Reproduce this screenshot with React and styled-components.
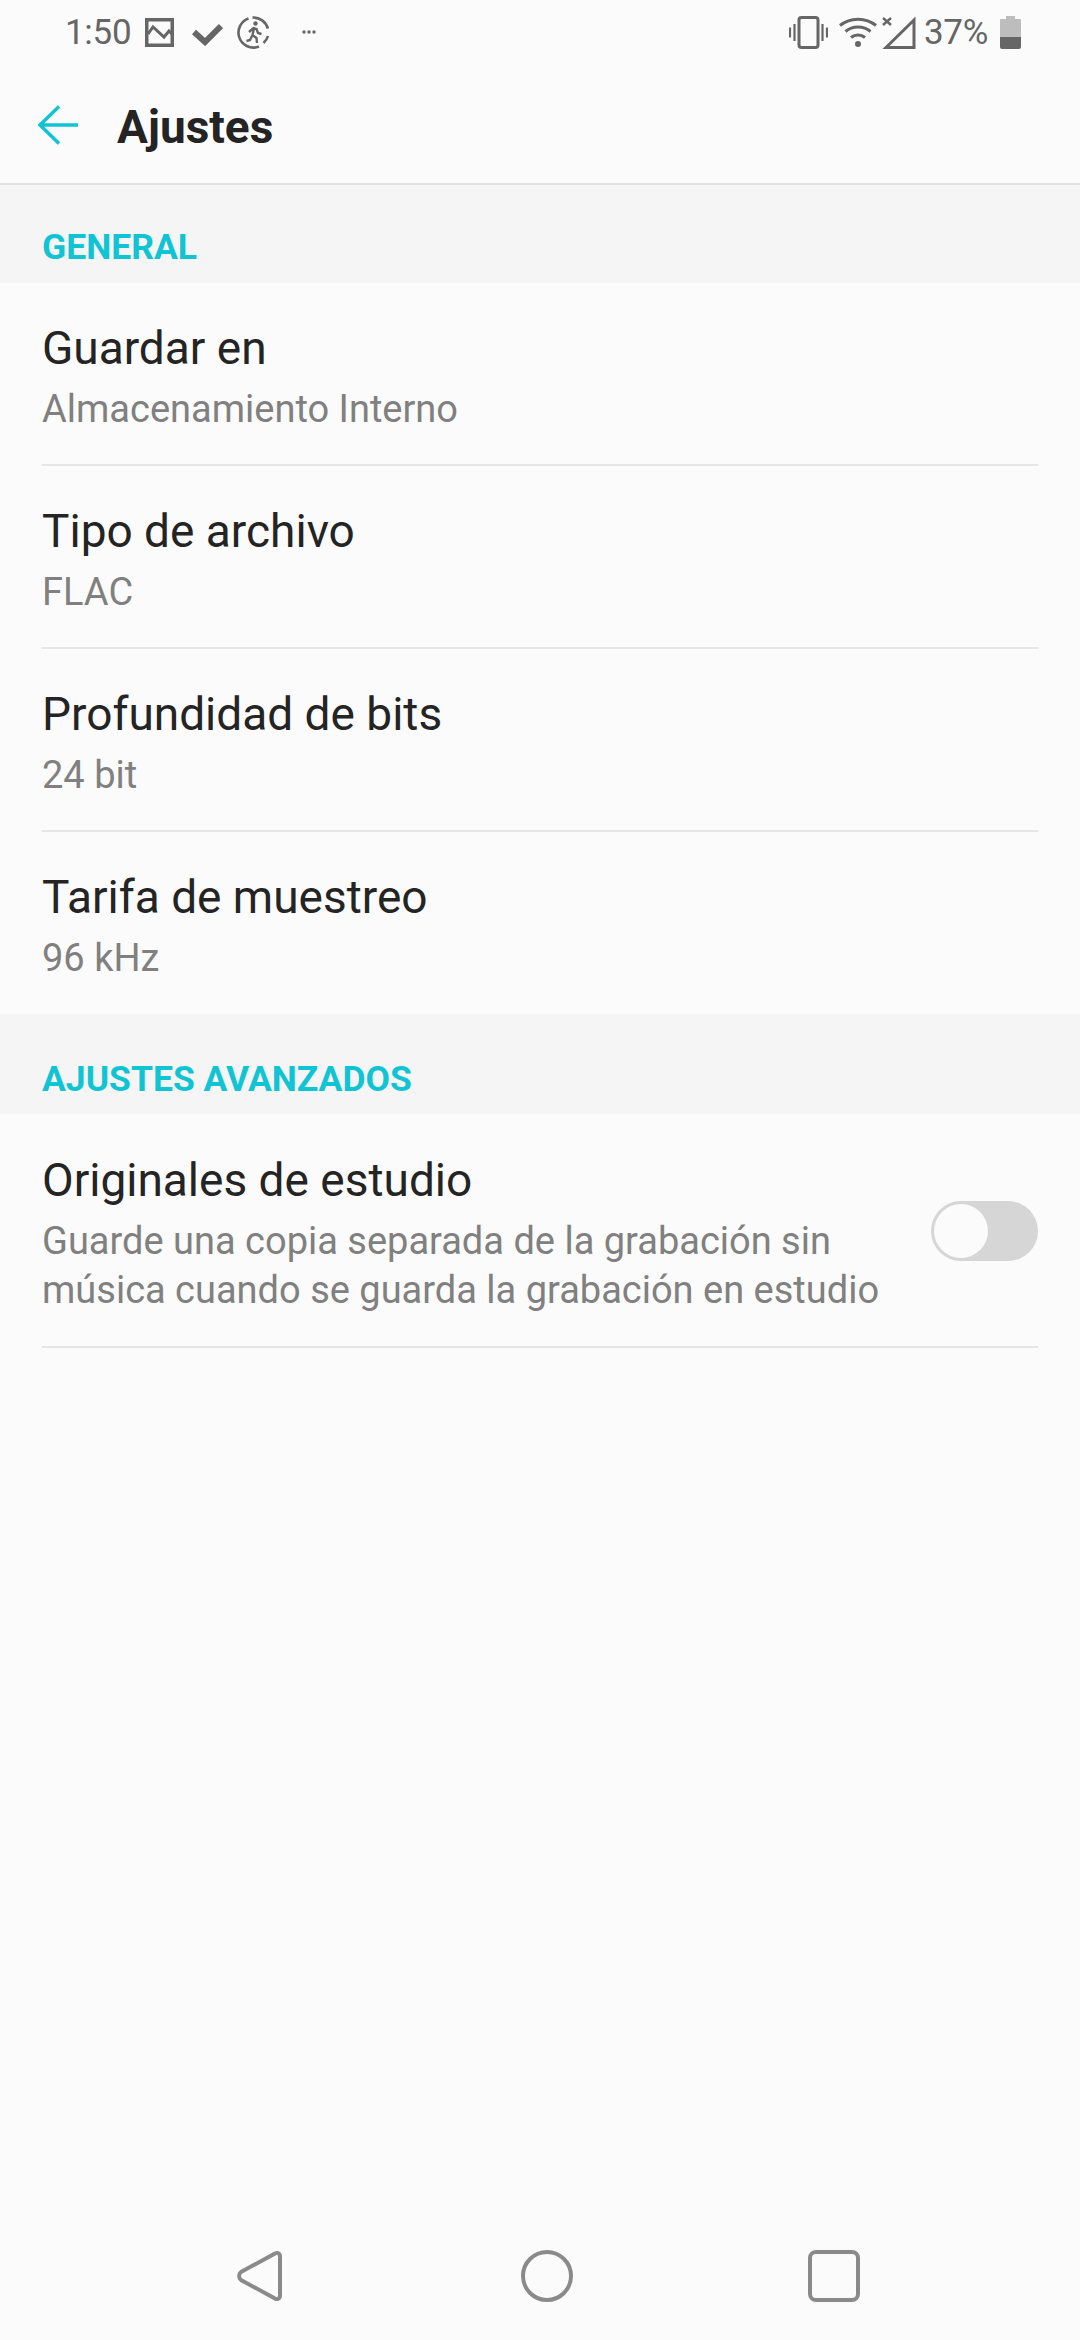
import React from 'react';
import styled, { createGlobalStyle } from 'styled-components';

const GlobalStyle = createGlobalStyle`
  html, body {
    margin: 0;
    padding: 0;
    background: #fbfbfb;
    font-family: Roboto, "Noto Sans", sans-serif;
  }
`;

const Screen = styled.div`
  width: 1080px;
  height: 2340px;
  display: flex;
  flex-direction: column;
  background: #fbfbfb;
  overflow: hidden;
`;

const StatusBar = styled.div`
  height: 64px;
  flex: none;
  display: flex;
  align-items: center;
  justify-content: space-between;
  padding: 0 59px 0 65px;
  color: #666;
`;

const StatusGroup = styled.div`
  display: flex;
  align-items: center;
`;

const StatusText = styled.span`
  font-size: 35px;
  line-height: 64px;
  letter-spacing: -0.3px;
  color: #666;
  margin: ${(p) => p.$margin || '2px 0 0 0'};
`;

const StatusIcon = styled.svg`
  display: block;
  flex: none;
  margin-left: ${(p) => p.$left || 0}px;
  margin-top: ${(p) => p.$top || 0}px;
`;

const Header = styled.header`
  height: 121px;
  flex: none;
  display: flex;
  align-items: center;
  padding: 3px 0 0 38px;
  box-sizing: border-box;
  border-bottom: 2px solid #e1e1e1;
`;

const Title = styled.h1`
  margin: 3px 0 0 39px;
  font-size: 46px;
  font-weight: 700;
  color: #242424;
`;

const SectionHead = styled.div`
  height: ${(p) => p.$height}px;
  flex: none;
  display: flex;
  align-items: flex-end;
  box-sizing: border-box;
  padding: 0 0 ${(p) => p.$bottom}px 42px;
  background: #f5f5f5;
  color: #10c4d4;
  font-size: 35.5px;
  line-height: 40px;
  font-weight: 700;
`;

const Row = styled.div`
  flex: none;
  margin: 0 42px;
  height: ${(p) => p.$height || 183}px;
  box-sizing: border-box;
  padding-top: ${(p) => p.$top || 39}px;
  display: flex;
  align-items: flex-start;
  justify-content: space-between;
  border-bottom: ${(p) => (p.$last ? 'none' : '2px solid #e6e6e6')};
`;

const RowText = styled.div`
  display: flex;
  flex-direction: column;
`;

const RowTitle = styled.div`
  font-size: 46px;
  line-height: 52px;
  color: #242424;
`;

const RowSub = styled.div`
  font-size: 38px;
  line-height: 49px;
  margin-top: 11px;
  color: #808080;
`;

const Toggle = styled.div`
  width: 107px;
  height: 60px;
  margin-top: 47px;
  border-radius: 30px;
  background: #d6d6d6;
  padding: 3px;
  box-sizing: border-box;
  flex: none;
`;

const ToggleKnob = styled.div`
  width: 54px;
  height: 54px;
  border-radius: 50%;
  background: #fbfbfb;
`;

const Spacer = styled.div`
  flex: 1;
`;

const NavBar = styled.nav`
  height: 130px;
  flex: none;
  display: flex;
  align-items: flex-start;
  gap: 235px;
  padding: 40px 0 0 237px;
  box-sizing: border-box;
`;

const NavIcon = styled.svg`
  display: block;
  fill: none;
  stroke: #8a8a8a;
  stroke-width: 4;
`;

const BackIcon = styled.svg`
  display: block;
  flex: none;
  fill: none;
  stroke: #10c4d4;
  stroke-width: 3.5;
`;

function ImageIcon() {
  return (
    <StatusIcon $left={14} width="29" height="29" viewBox="0 0 29 29" fill="none" stroke="#666" strokeWidth="3.5">
      <rect x="1.750" y="1.750" width="25.500" height="25.500" />
      <path d="M3 16l5-7 11 10 5-6 4 4" strokeWidth="3" />
    </StatusIcon>
  );
}

function CheckIcon() {
  return (
    <StatusIcon $left={18} $top={4} width="31" height="23" viewBox="0 0 31 23" fill="none" stroke="#666" strokeWidth="6">
      <path d="M2 9l11 10L29 3" />
    </StatusIcon>
  );
}

function WalkIcon() {
  return (
    <StatusIcon $left={14} width="33" height="33" viewBox="0 0 33 33" fill="none" stroke="#666">
      <path d="M15.500 1.600a15 15 0 0 1 15.400 11M31 20a15 15 0 0 1-4.500 7M22 30.500a15 15 0 0 1-20-10A15 15 0 0 1 11.500 2.500" strokeWidth="2.600" />
      <circle cx="18.500" cy="7.500" r="2.200" fill="#666" stroke="none" />
      <path d="M12 16l4.500-4 3 1 1.500 4 3.500 1M17 12.500l-1.500 6.500 4 3 .5 5M15 20l-2 4-3.500 1" strokeWidth="2.400" />
    </StatusIcon>
  );
}

function VibrateIcon() {
  return (
    <StatusIcon width="39" height="33" viewBox="0 0 39 33" fill="none" stroke="#666">
      <rect x="10" y="1.500" width="19" height="30" rx="2.500" strokeWidth="3" />
      <path d="M5.500 8v17M1 11.500v10M33.500 8v17M38 11.500v10" strokeWidth="2.200" />
    </StatusIcon>
  );
}

function WifiIcon() {
  return (
    <StatusIcon $left={11} width="38" height="32" viewBox="0 0 38 32" fill="none" stroke="#666" strokeWidth="3">
      <path d="M1 9.500C11 1 27 1 37 9.500M6.500 15.500c7-6 18-6 25 0M12 21.500c4-3.500 10-3.500 14 0" />
      <circle cx="19" cy="28" r="3" fill="#666" stroke="none" />
    </StatusIcon>
  );
}

function SignalIcon() {
  return (
    <StatusIcon $left={5} width="34" height="33" viewBox="0 0 34 33" fill="none" stroke="#666">
      <path d="M4 31.500L32 4v27.500z" strokeWidth="3" />
      <path d="M1 2l8 7M9 2L1 9" strokeWidth="2.400" />
    </StatusIcon>
  );
}

function BatteryIcon() {
  return (
    <StatusIcon $left={12} width="21" height="33" viewBox="0 0 21 33">
      <path d="M6 0h9v3h5a1 1 0 0 1 1 1v17H0V4a1 1 0 0 1 1-1h5z" fill="#bdbdbd" />
      <path d="M0 21h21v10a2 2 0 0 1-2 2H2a2 2 0 0 1-2-2z" fill="#666" />
    </StatusIcon>
  );
}

function DotsIcon() {
  return (
    <StatusIcon $left={32} width="14" height="4" viewBox="0 0 14 4" fill="#666">
      <circle cx="2" cy="2" r="1.700" />
      <circle cx="7" cy="2" r="1.700" />
      <circle cx="12" cy="2" r="1.700" />
    </StatusIcon>
  );
}

function BackArrow() {
  return (
    <BackIcon width="40" height="40" viewBox="0 0 40 40">
      <path d="M40 20H2M21 1.500L2 20l19 18.500" />
    </BackIcon>
  );
}

const generalRows = [
  { title: 'Guardar en', sub: 'Almacenamiento Interno' },
  { title: 'Tipo de archivo', sub: 'FLAC' },
  { title: 'Profundidad de bits', sub: '24 bit' },
  { title: 'Tarifa de muestreo', sub: '96 kHz', last: true },
];

export default function App() {
  return (
    <>
      <GlobalStyle />
      <Screen>
        <StatusBar>
          <StatusGroup>
            <StatusText>1:50</StatusText>
            <ImageIcon />
            <CheckIcon />
            <WalkIcon />
            <DotsIcon />
          </StatusGroup>
          <StatusGroup>
            <VibrateIcon />
            <WifiIcon />
            <SignalIcon />
            <StatusText $margin="2px 0 0 8px">37%</StatusText>
            <BatteryIcon />
          </StatusGroup>
        </StatusBar>
        <Header>
          <BackArrow />
          <Title>Ajustes</Title>
        </Header>
        <SectionHead $height={98} $bottom={16}>GENERAL</SectionHead>
        {generalRows.map((row) => (
          <Row key={row.title} $last={row.last} $height={row.last ? 182 : 183}>
            <RowText>
              <RowTitle>{row.title}</RowTitle>
              <RowSub>{row.sub}</RowSub>
            </RowText>
          </Row>
        ))}
        <SectionHead $height={100} $bottom={15}>AJUSTES AVANZADOS</SectionHead>
        <Row $height={234} $top={40}>
          <RowText>
            <RowTitle>Originales de estudio</RowTitle>
            <RowSub>
              Guarde una copia separada de la grabación sin
              <br />
              música cuando se guarda la grabación en estudio
            </RowSub>
          </RowText>
          <Toggle>
            <ToggleKnob />
          </Toggle>
        </Row>
        <Spacer />
        <NavBar>
          <NavIcon width="49" height="52" viewBox="0 0 49 52">
            <path d="M37 4c2.500-2 6-1 6 2.500v39c0 3.500-3.500 4.500-6 2.500L4 30c-2.500-2-2.500-6 0-8z" />
          </NavIcon>
          <NavIcon width="52" height="52" viewBox="0 0 52 52">
            <circle cx="26" cy="26" r="24" />
          </NavIcon>
          <NavIcon width="52" height="52" viewBox="0 0 52 52">
            <rect x="2" y="2" width="48" height="48" rx="6" />
          </NavIcon>
        </NavBar>
      </Screen>
    </>
  );
}
